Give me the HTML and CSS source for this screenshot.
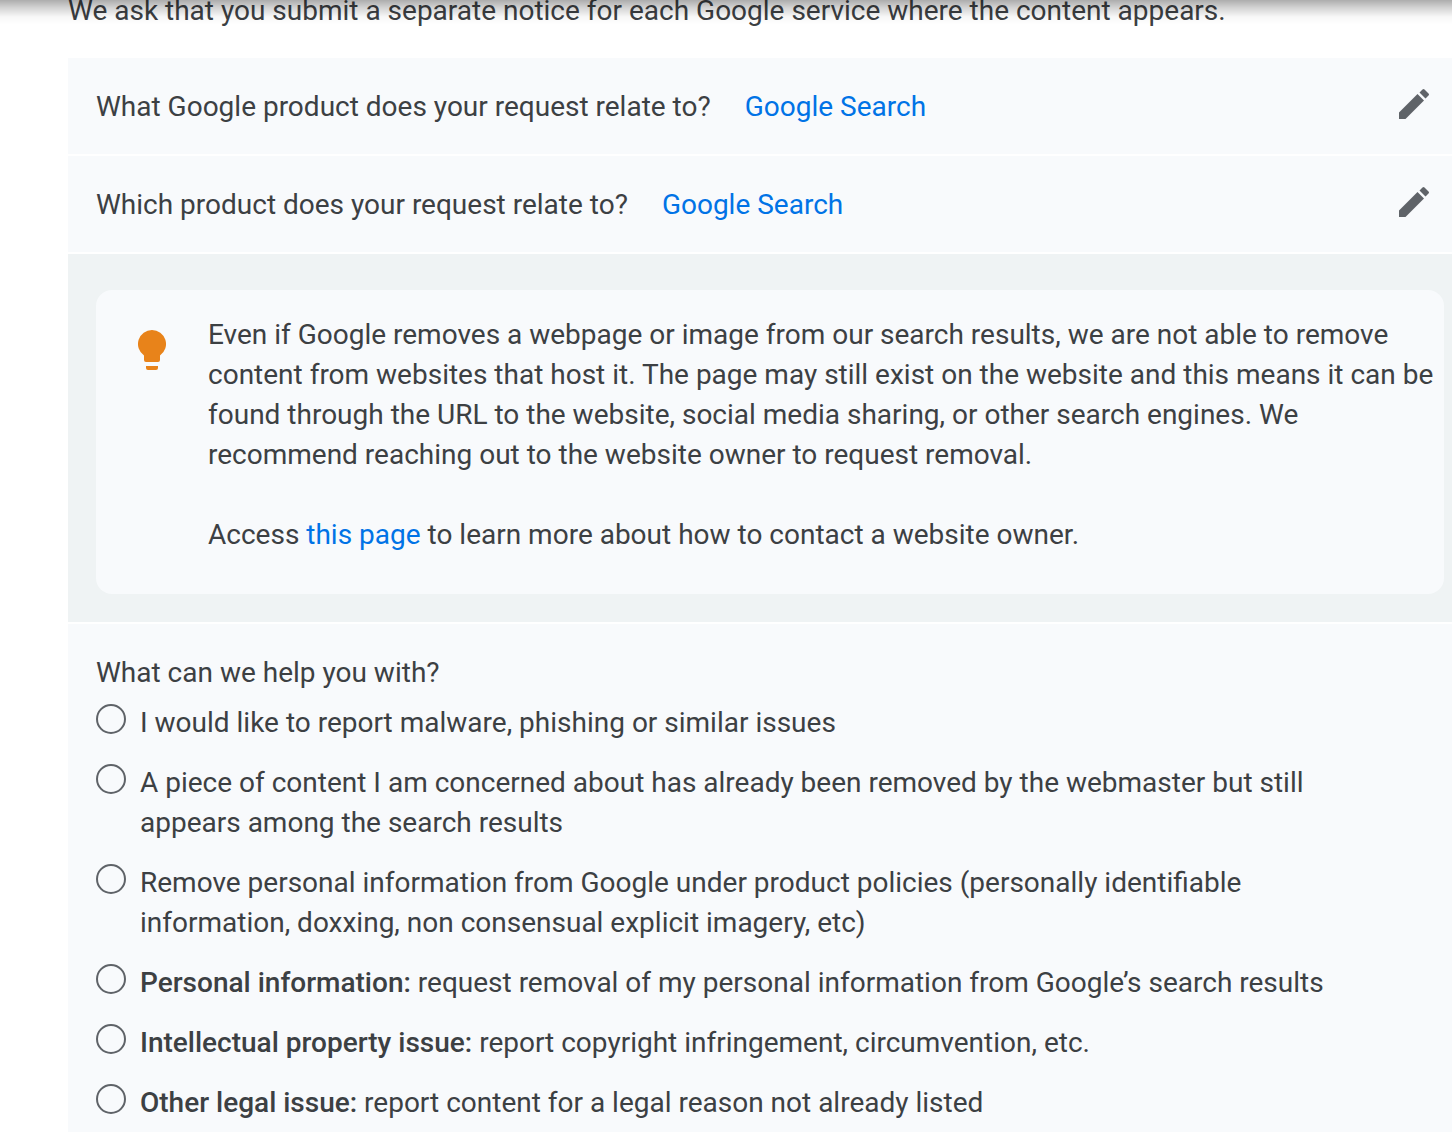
FILE: index.html
```html
<!DOCTYPE html>
<html lang="en">

<head>
  <meta charset="UTF-8">
  <meta name="viewport" content="width=device-width, initial-scale=1.0">
  <title>Report Content On Google</title>
  <link rel="stylesheet" href="styles.css">
</head>

<body>
  <div class="top-shadow"></div>
  <main class="page">
    <p class="intro">We ask that you submit a separate notice for each Google service where the content appears.</p>

    <form class="steps">
      <div class="step answered">
        <span>What Google product does your request relate to?</span>
        <a class="answer" href="#product">Google Search</a>
        <button class="edit" type="button" aria-label="Edit product">
          <svg viewBox="0 0 30 30"><path d="M0 30v-6.500L18.500 5l6.500 6.500L6.500 30zM20.500 3.500l3-3q1-1 2 0l4 4q1 1 0 2l-3 3z"/></svg>
        </button>
      </div>

      <div class="step answered">
        <span>Which product does your request relate to?</span>
        <a class="answer" href="#service">Google Search</a>
        <button class="edit" type="button" aria-label="Edit service">
          <svg viewBox="0 0 30 30"><path d="M0 30v-6.500L18.500 5l6.500 6.500L6.500 30zM20.500 3.500l3-3q1-1 2 0l4 4q1 1 0 2l-3 3z"/></svg>
        </button>
      </div>

      <div class="notice">
        <div class="tip">
          <svg class="bulb" viewBox="0 0 28 40"><path d="M14 0a14 14 0 0 0-8 25.500V30a2 2 0 0 0 2 2h12a2 2 0 0 0 2-2v-4.500A14 14 0 0 0 14 0zM8 36h12v2a2 2 0 0 1-2 2H10a2 2 0 0 1-2-2z"/></svg>
          <div>
            <p>Even if Google removes a webpage or image from our search results, we are not able to remove content from websites that host it. The page may still exist on the website and this means it can be found through the URL to the website, social media sharing, or other search engines. We recommend reaching out to the website owner to request removal.</p>
            <p>Access <a href="#contact">this page</a> to learn more about how to contact a website owner.</p>
          </div>
        </div>
      </div>

      <fieldset class="step question">
        <legend>What can we help you with?</legend>
        <label><input type="radio" name="issue"><span>I would like to report malware, phishing or similar issues</span></label>
        <label><input type="radio" name="issue"><span>A piece of content I am concerned about has already been removed by the webmaster but still appears among the search results</span></label>
        <label><input type="radio" name="issue"><span>Remove personal information from Google under product policies (personally identifiable information, doxxing, non consensual explicit imagery, etc)</span></label>
        <label><input type="radio" name="issue"><span><b>Personal information:</b> request removal of my personal information from Google’s search results</span></label>
        <label><input type="radio" name="issue"><span><b>Intellectual property issue:</b> report copyright infringement, circumvention, etc.</span></label>
        <label><input type="radio" name="issue"><span><b>Other legal issue:</b> report content for a legal reason not already listed</span></label>
      </fieldset>
    </form>
  </main>
</body>

</html>
```

FILE: styles.css
```css
* {
  box-sizing: border-box;
}

body {
  margin: 0;
  background: #fff;
  color: #3c4043;
  font-family: Roboto, Arial, sans-serif;
  font-size: 28px;
  line-height: 40px;
}

p {
  margin: 0;
}

a {
  color: #0073e6;
  text-decoration: none;
}

/* shadow of the header above the page */
.top-shadow {
  position: fixed;
  top: 0;
  left: 0;
  right: 0;
  height: 24px;
  background: linear-gradient(rgba(0, 0, 0, 0.32), rgba(0, 0, 0, 0.16) 35%, rgba(0, 0, 0, 0.03) 70%, transparent);
}

.page {
  padding-left: 68px;
}

.intro {
  margin-top: -9px;
  padding-bottom: 27px;
}

.steps {
  display: flex;
  flex-direction: column;
  gap: 2px;
}

.step {
  background: #f8fafc;
}

.answered {
  display: flex;
  align-items: flex-start;
  gap: 34px;
  padding: 29px 23px 27px 28px;
}

.edit {
  margin: 2px 0 0 auto;
  padding: 0;
  border: 0;
  background: none;
  cursor: pointer;
}

.edit svg {
  display: block;
  width: 30px;
  height: 30px;
  fill: #5f6368;
}

.notice {
  padding: 36px 8px 28px 28px;
  background: #eff3f4;
}

.tip {
  display: flex;
  align-items: flex-start;
  gap: 42px;
  padding: 25px 8px 39px 42px;
  border-radius: 16px;
  background: #f8fafc;
}

.tip p + p {
  margin-top: 40px;
}

.bulb {
  flex: none;
  width: 28px;
  height: 40px;
  margin-top: 15px;
  fill: #e8831a;
}

/* what can we help with */
.question {
  display: flex;
  flex-direction: column;
  gap: 20px;
  margin: 0;
  padding: 29px 100px 12px 28px;
  border: 0;
}

.question legend {
  float: left;
  padding: 0;
  margin-bottom: -10px;
}

.question label {
  display: flex;
  align-items: flex-start;
  gap: 14px;
}

.question input {
  flex: none;
  appearance: none;
  width: 30px;
  height: 30px;
  margin: 1px 0 0;
  border: 2px solid #5f6368;
  border-radius: 50%;
}

.question input:checked {
  background: radial-gradient(#0073e6 45%, transparent 50%);
}

b {
  font-weight: 500;
}
```
